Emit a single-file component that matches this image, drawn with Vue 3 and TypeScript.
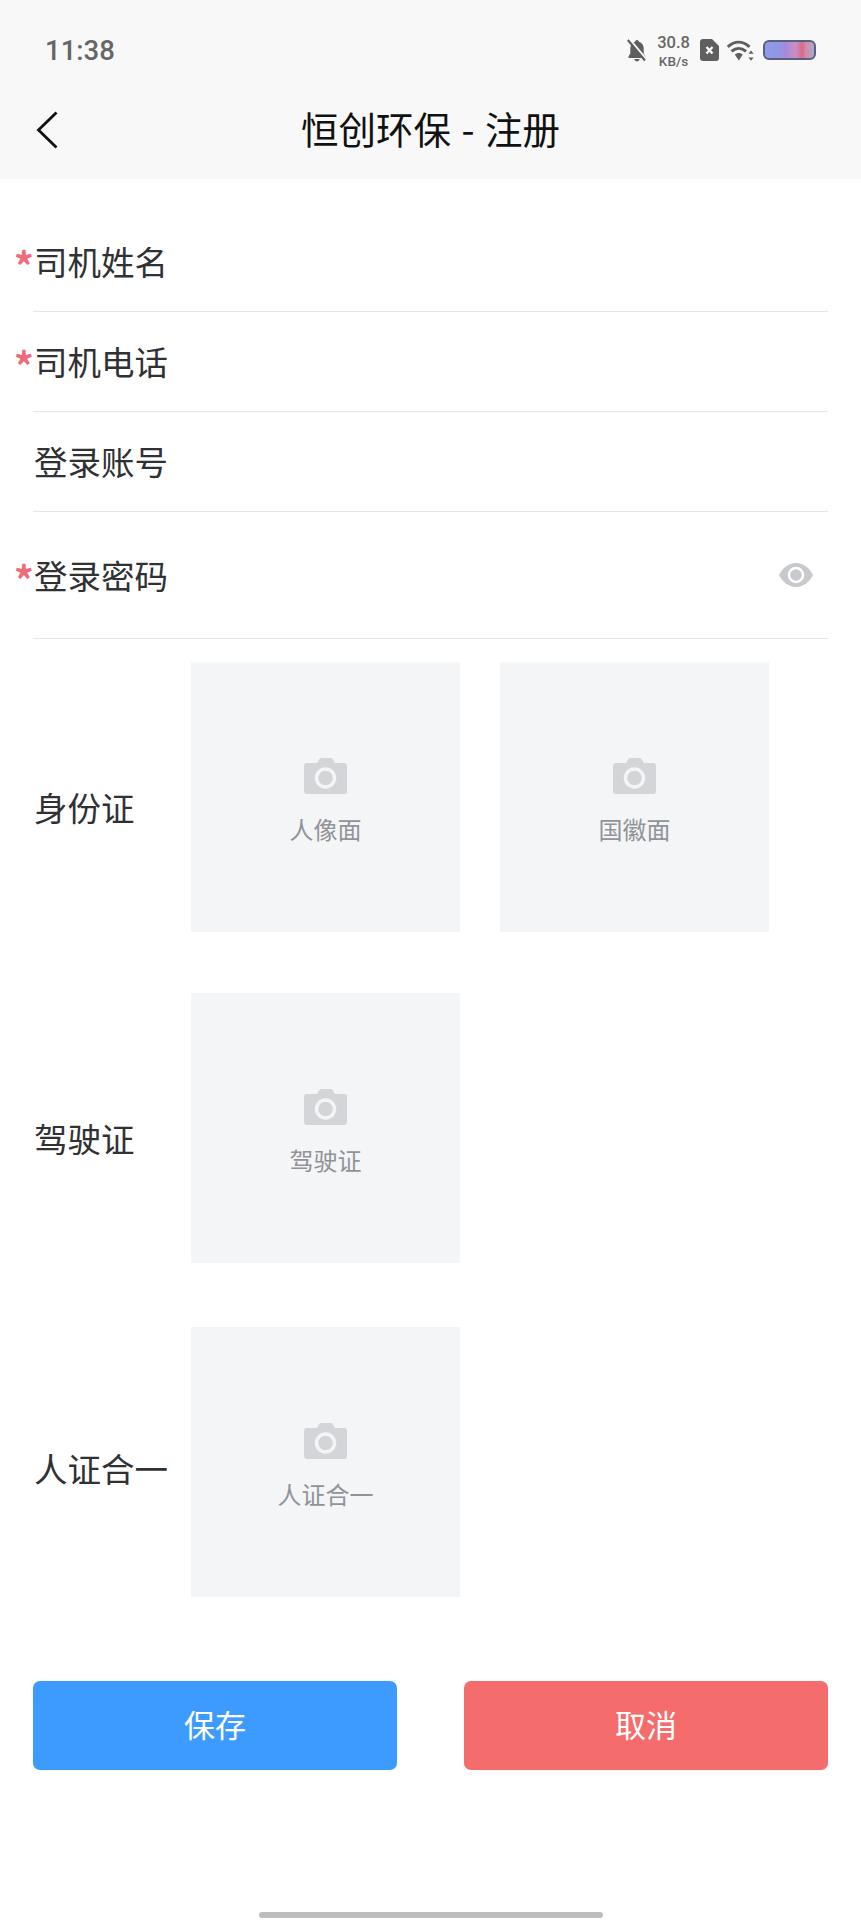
<script setup lang="ts">
interface Field { label: string; required: boolean; eye?: boolean }
interface Upload { label: string; gapClass: string; slots: string[] }

const fields: Field[] = [
  { label: '司机姓名', required: true },
  { label: '司机电话', required: true },
  { label: '登录账号', required: false },
  { label: '登录密码', required: true, eye: true },
]
const uploads: Upload[] = [
  { label: '身份证', gapClass: 'gap-a', slots: ['人像面', '国徽面'] },
  { label: '驾驶证', gapClass: 'gap-b', slots: ['驾驶证'] },
  { label: '人证合一', gapClass: 'gap-c', slots: ['人证合一'] },
]
</script>

<template>
  <div class="page">
    <header class="top">
      <div class="status">
        <span class="time">11:38</span>
        <div class="status-icons">
          <svg class="bell" viewBox="0 0 20 23" width="20" height="23">
            <path d="M10 1c-1 0-1.800.8-1.900 1.800C5 3.700 3.300 6.300 3.300 9.500v5L1.500 17.500v1.500h17v-1.500l-1.800-3v-5c0-3.200-1.700-5.800-4.800-6.700C11.800 1.800 11 1 10 1zM7.300 20c.3 1.300 1.400 2.500 2.700 2.500s2.400-1.200 2.700-2.500z" fill="#5f5f5f" />
            <path d="M2.500 0.500L19.500 20.500" stroke="#f8f8f8" stroke-width="2.500" />
            <path d="M0.800 1L18 21.500" stroke="#5f5f5f" stroke-width="2.200" />
          </svg>
          <div class="speed"><span class="speed-num">30.8</span><span class="speed-unit">KB/s</span></div>
          <svg class="sim" viewBox="0 0 19 22" width="19" height="22">
            <path d="M3 0h9l7 7v12a3 3 0 0 1-3 3H3a3 3 0 0 1-3-3V3a3 3 0 0 1 3-3z" fill="#5f5f5f" />
            <path d="M6.500 8l6 6.500M12.500 8l-6 6.500" stroke="#f8f8f8" stroke-width="2.400" />
          </svg>
          <svg class="wifi" viewBox="0 0 27 21" width="27" height="21">
            <path d="M0.800 6.800C7.500 0.600 15.500 0.600 22.500 6.800" fill="none" stroke="#5f5f5f" stroke-width="3" />
            <path d="M4.500 11.300C9 7.400 14.500 7.400 19 11.300" fill="none" stroke="#5f5f5f" stroke-width="3" />
            <path d="M7.800 14.500L11.800 20.500L15.800 14.500C13.500 12.400 10.100 12.400 7.800 14.500z" fill="#5f5f5f" />
            <path d="M24 10.500l-2.500 3.200h5zM24 20.800l-2.500-3.200h5z" fill="#5f5f5f" />
          </svg>
          <div class="battery"></div>
        </div>
      </div>
      <div class="nav">
        <svg class="back" viewBox="0 0 24 38" width="24" height="38">
          <path d="M21.500 1.500L3.500 19L21.500 36.500" fill="none" stroke="#111" stroke-width="2.800" />
        </svg>
        <h1 class="title">恒创环保 - 注册</h1>
      </div>
    </header>

    <main class="form">
      <div v-for="f in fields" :key="f.label" class="field" :class="{ 'field-tall': f.eye }">
        <span class="label-wrap">
          <span v-if="f.required" class="star">*</span>
          <span class="label">{{ f.label }}</span>
        </span>
        <svg v-if="f.eye" class="eye" viewBox="0 0 34 24" width="34" height="24">
          <path d="M17 0C9.500 0 3.500 5 0 12c3.500 7 9.500 12 17 12s13.500-5 17-12C30.500 5 24.500 0 17 0z" fill="#c8c9cc" />
          <circle cx="17" cy="12" r="7" fill="#c8c9cc" stroke="#fff" stroke-width="2.500" />
        </svg>
      </div>

      <div v-for="u in uploads" :key="u.label" class="upload-row" :class="u.gapClass">
        <span class="label upload-label">{{ u.label }}</span>
        <div class="slots">
          <div v-for="s in u.slots" :key="s" class="slot">
            <svg class="camera" viewBox="0 0 43 36" width="43" height="36">
              <path d="M3 5h10l2.500-4a2.500 2.500 0 0 1 2-1h9a2.500 2.500 0 0 1 2 1L31 5h9a3 3 0 0 1 3 3v25a3 3 0 0 1-3 3H3a3 3 0 0 1-3-3V8a3 3 0 0 1 3-3z" fill="#d4d5d8" />
              <circle cx="21.500" cy="20" r="9" fill="#d4d5d8" stroke="#f4f5f7" stroke-width="3.500" />
            </svg>
            <span class="slot-text">{{ s }}</span>
          </div>
        </div>
      </div>

      <div class="actions">
        <button class="btn save" type="button">保存</button>
        <button class="btn cancel" type="button">取消</button>
      </div>
    </main>

    <div class="home-bar"></div>
  </div>
</template>

<style>
html, body { margin: 0; background: #fff; }
</style>

<style scoped>
.page {
  width: 861px;
  height: 1920px;
  display: flex;
  flex-direction: column;
  background: #fff;
  font-family: "Noto Sans CJK SC", "Noto Sans", sans-serif;
  overflow: hidden;
}
.top {
  height: 179px;
  flex: none;
  background: #f8f8f8;
  display: flex;
  flex-direction: column;
}
.status {
  height: 100px;
  flex: none;
  display: flex;
  align-items: center;
  justify-content: space-between;
  padding: 0 45px;
}
.time {
  font-family: Roboto, sans-serif;
  font-size: 27.500px;
  font-weight: 500;
  color: #666;
}
.status-icons {
  display: flex;
  align-items: center;
}
.bell { margin-right: 9px; }
.speed {
  width: 35px;
  display: flex;
  flex-direction: column;
  align-items: center;
  font-family: Roboto, sans-serif;
  font-weight: 500;
  color: #666;
  margin-right: 9px;
  margin-top: 4px;
}
.speed-num { font-size: 16.500px; line-height: 18px; }
.speed-unit { font-size: 13.500px; line-height: 18px; }
.sim { margin-right: 8px; }
.wifi { margin-right: 9px; }
.battery {
  width: 53px;
  height: 20px;
  box-sizing: border-box;
  border: 2px solid #5a6080;
  border-radius: 6px;
  background: linear-gradient(90deg, #8e9be8 0%, #8f97e6 28%, #a888d8 42%, #c890c8 62%, #d86a88 76%, #d58ca8 84%, #a8a8d0 100%);
}
.nav {
  height: 79px;
  flex: none;
  box-sizing: border-box;
  position: relative;
  display: flex;
  align-items: center;
  justify-content: center;
  padding-bottom: 23px;
}
.back {
  position: absolute;
  left: 35px;
  top: 11px;
}
.title {
  margin: 0;
  font-size: 37.500px;
  font-weight: 400;
  color: #111;
  line-height: 50px;
  word-spacing: 2px;
}
.form {
  padding: 33px 33px 0;
  display: flex;
  flex-direction: column;
}
.field {
  height: 100px;
  box-sizing: border-box;
  display: flex;
  align-items: center;
  justify-content: space-between;
  border-bottom: 1px solid #e6e6e6;
  padding-bottom: 1px;
}
.field-tall { height: 127px; padding-bottom: 0; }
.label-wrap {
  position: relative;
  display: block;
  padding-left: 1px;
}
.label {
  font-size: 33.500px;
  line-height: 46px;
  color: #303133;
}
.star {
  position: absolute;
  left: -19px;
  top: 3px;
  font-size: 39px;
  font-weight: 700;
  line-height: 46px;
  color: #ee6b7b;
}
.eye { margin-right: 15px; }
.upload-row {
  display: flex;
  align-items: center;
}
.gap-a { margin-top: 23px; }
.gap-b { margin-top: 61px; }
.gap-c { margin-top: 64px; }
.upload-label {
  width: 158px;
  flex: none;
  padding-left: 1px;
  box-sizing: border-box;
  margin-top: 20px;
}
.gap-c .upload-label { margin-top: 12px; }
.slots {
  display: flex;
  gap: 40px;
}
.slot {
  width: 269px;
  height: 270px;
  background: #f4f5f7;
  display: flex;
  flex-direction: column;
  align-items: center;
  justify-content: center;
  gap: 20px;
  box-sizing: border-box;
  padding-top: 8px;
}
.slot-text {
  font-size: 24px;
  line-height: 30px;
  color: #909399;
}
.actions {
  display: flex;
  justify-content: space-between;
  margin-top: 84px;
}
.btn {
  width: 364px;
  height: 89px;
  border: none;
  border-radius: 7px;
  color: #fff;
  font-family: inherit;
  font-size: 31px;
  line-height: 40px;
  padding: 0 0 4px;
}
.save { background: #3d9bff; }
.cancel { background: #f56c6c; }
.home-bar {
  margin: auto 0 2px 259px;
  width: 344px;
  height: 6px;
  border-radius: 3px;
  background: #bdbdbd;
}
</style>
